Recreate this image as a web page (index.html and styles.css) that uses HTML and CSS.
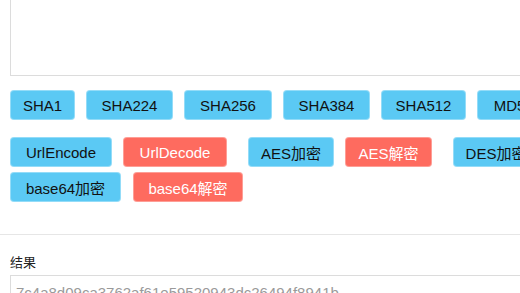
FILE: index.html
```html
<!DOCTYPE html>
<html lang="zh">
<head>
<meta charset="utf-8">
<link rel="stylesheet" href="styles.css">
</head>
<body>
<div class="page">
  <textarea class="source"></textarea>
  <div class="row row-hash">
    <button class="btn blue w65">SHA1</button>
    <button class="btn blue w87">SHA224</button>
    <button class="btn blue w88">SHA256</button>
    <button class="btn blue w87">SHA384</button>
    <button class="btn blue w85">SHA512</button>
    <button class="btn blue w65">MD5</button>
  </div>
  <div class="row row-crypt">
    <div class="pair">
      <button class="btn blue w102">UrlEncode</button>
      <button class="btn red w104">UrlDecode</button>
    </div>
    <div class="pair">
      <button class="btn blue w86">AES加密</button>
      <button class="btn red w87">AES解密</button>
    </div>
    <div class="pair">
      <button class="btn blue w86">DES加密</button>
      <button class="btn red w87">DES解密</button>
    </div>
  </div>
  <div class="row row-base">
    <button class="btn blue w111">base64加密</button>
    <button class="btn red w110">base64解密</button>
  </div>
</div>
<hr class="divider">
<div class="page result">
  <div class="label">结果</div>
  <input class="output" type="text" value="7c4a8d09ca3762af61e59520943dc26494f8941b">
</div>
</body>
</html>
```
FILE: styles.css
```css
html, body {
  margin: 0;
  padding: 0;
  overflow: hidden;
  background: #fff;
  font-family: "Liberation Sans", "Noto Sans CJK SC", sans-serif;
}
.page {
  padding-left: 10px;
  width: 700px;
}
.source {
  display: block;
  box-sizing: border-box;
  width: 620px;
  height: 86px;
  margin: -10px 0 0 0;
  border: 1px solid #dcdcdc;
  resize: none;
  background: #fff;
  outline: none;
}
.row {
  display: flex;
  flex-wrap: nowrap;
}
.row-hash {
  margin-top: 14px;
  gap: 11px;
}
.row-crypt {
  margin-top: 17px;
  gap: 21px;
}
.pair {
  display: flex;
  gap: 11px;
}
.row-base {
  margin-top: 5px;
  gap: 12px;
}
.btn {
  flex: none;
  height: 30px;
  padding: 0;
  border: 1px solid rgba(255,255,255,0.35);
  border-radius: 4px;
  font-family: "Liberation Sans", "Noto Sans CJK SC", sans-serif;
  font-size: 15px;
  text-align: center;
  white-space: nowrap;
  cursor: pointer;
}
.blue { background: #5bc9f4; color: #111; }
.red { background: #fe6b5f; color: #fff; }
.w65 { width: 65px; }
.w85 { width: 85px; }
.w86 { width: 86px; }
.w87 { width: 87px; }
.w88 { width: 88px; }
.w102 { width: 102px; }
.w104 { width: 104px; }
.w110 { width: 110px; }
.w111 { width: 111px; }
.divider {
  margin: 32px 0 0 0;
  border: none;
  border-top: 1px solid #e6e6e6;
  height: 0;
}
.label {
  margin-top: 17px;
  font-family: "Noto Sans CJK SC", sans-serif;
  font-size: 13px;
  line-height: 20px;
  color: #222;
}
.output {
  display: block;
  box-sizing: border-box;
  margin-top: 3px;
  width: 620px;
  height: 34px;
  padding: 0 5px;
  border: 1px solid #dcdcdc;
  font-family: "Liberation Sans", sans-serif;
  font-size: 15px;
  color: #9a9a9a;
  outline: none;
}
```
